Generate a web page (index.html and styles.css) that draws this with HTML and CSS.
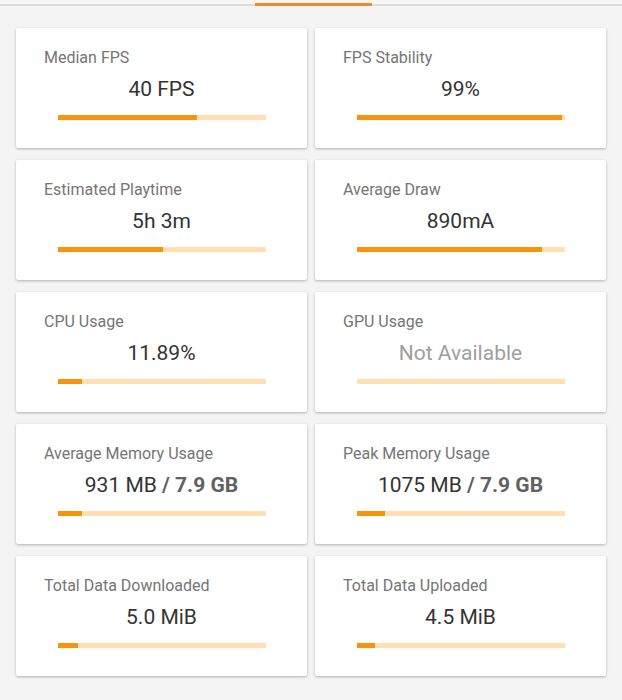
FILE: index.html
```html
<!DOCTYPE html>
<html>
<head>
<meta charset="utf-8">
<link rel="stylesheet" href="styles.css">
</head>
<body>
<div class="tabbar"><div class="indicator"></div></div>
<div class="grid">
  <div class="card">
    <div class="label">Median FPS</div>
    <div class="value">40 FPS</div>
    <div class="bar"><div class="fill" style="width:67%"></div></div>
  </div>
  <div class="card">
    <div class="label">FPS Stability</div>
    <div class="value">99%</div>
    <div class="bar"><div class="fill" style="width:99%"></div></div>
  </div>
  <div class="card">
    <div class="label">Estimated Playtime</div>
    <div class="value">5h 3m</div>
    <div class="bar"><div class="fill" style="width:50.5%"></div></div>
  </div>
  <div class="card">
    <div class="label">Average Draw</div>
    <div class="value">890mA</div>
    <div class="bar"><div class="fill" style="width:89%"></div></div>
  </div>
  <div class="card">
    <div class="label">CPU Usage</div>
    <div class="value">11.89%</div>
    <div class="bar"><div class="fill" style="width:12%"></div></div>
  </div>
  <div class="card">
    <div class="label">GPU Usage</div>
    <div class="value na">Not Available</div>
    <div class="bar"><div class="fill" style="width:0%"></div></div>
  </div>
  <div class="card">
    <div class="label">Average Memory Usage</div>
    <div class="value">931 MB <span class="total">/ 7.9 GB</span></div>
    <div class="bar"><div class="fill" style="width:12%"></div></div>
  </div>
  <div class="card">
    <div class="label">Peak Memory Usage</div>
    <div class="value">1075 MB <span class="total">/ 7.9 GB</span></div>
    <div class="bar"><div class="fill" style="width:13.6%"></div></div>
  </div>
  <div class="card">
    <div class="label">Total Data Downloaded</div>
    <div class="value">5.0 MiB</div>
    <div class="bar"><div class="fill" style="width:10%"></div></div>
  </div>
  <div class="card">
    <div class="label">Total Data Uploaded</div>
    <div class="value">4.5 MiB</div>
    <div class="bar"><div class="fill" style="width:9%"></div></div>
  </div>
</div>
</body>
</html>
```
FILE: styles.css
```css
html, body {
  margin: 0;
  padding: 0;
  background: #f4f4f4;
  font-family: Roboto, "Noto Sans", sans-serif;
}
.tabbar {
  height: 4px;
  background: #f7f7f7;
  border-bottom: 2px solid #dcdcdc;
  position: relative;
}
.indicator {
  position: absolute;
  left: 255px;
  bottom: -2px;
  width: 117px;
  height: 3px;
  background: #f08a2c;
}
.grid {
  display: grid;
  grid-template-columns: 291px 291px;
  column-gap: 8px;
  row-gap: 12px;
  padding: 22px 16px 24px;
}
.card {
  background: #fff;
  height: 120px;
  box-sizing: border-box;
  padding: 20px 28px 0;
  border-radius: 2px;
  box-shadow: 0 1px 3px rgba(0,0,0,0.28);
  display: flex;
  flex-direction: column;
}
.label {
  font-size: 16px;
  line-height: 20px;
  color: #757575;
}
.value {
  margin-top: 9px;
  font-size: 21px;
  line-height: 24px;
  color: #333;
  text-align: center;
}
.value.na {
  color: #9e9e9e;
}
.total {
  font-weight: bold;
  color: #616161;
}
.bar {
  margin: 14px auto 0;
  width: 208px;
  height: 5px;
  background: #ffe0b2;
}
.fill {
  height: 100%;
  background: #f7930d;
}
```
